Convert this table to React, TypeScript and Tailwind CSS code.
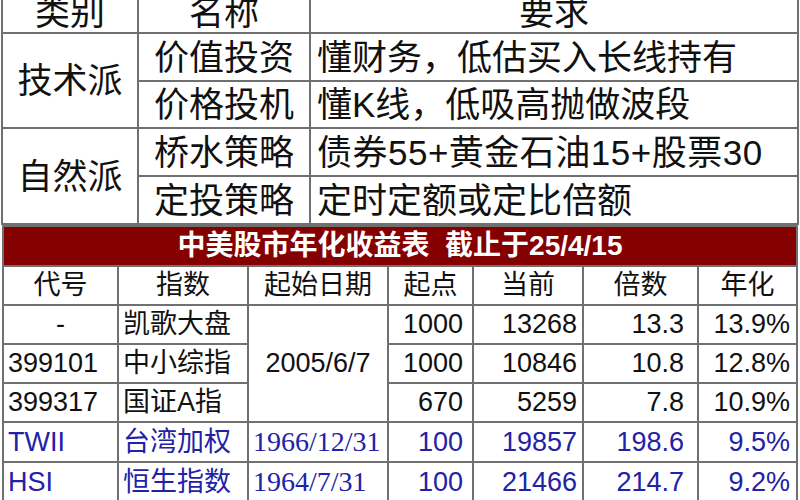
import React from 'react'

const FONT = "font-['Liberation_Sans','Noto_Sans_CJK_SC',sans-serif]"

type Row = {
  code: string
  name: string
  date?: string
  start: string
  now: string
  mult: string
  rate: string
  blue?: boolean
}

const rows: Row[] = [
  { code: '-', name: '凯歌大盘', start: '1000', now: '13268', mult: '13.3', rate: '13.9%' },
  { code: '399101', name: '中小综指', start: '1000', now: '10846', mult: '10.8', rate: '12.8%' },
  { code: '399317', name: '国证A指', start: '670', now: '5259', mult: '7.8', rate: '10.9%' },
  { code: 'TWII', name: '台湾加权', date: '1966/12/31', start: '100', now: '19857', mult: '198.6', rate: '9.5%', blue: true },
  { code: 'HSI', name: '恒生指数', date: '1964/7/31', start: '100', now: '21466', mult: '214.7', rate: '9.2%', blue: true },
]

function Cell({ className = '', children }: { className?: string; children?: React.ReactNode }) {
  return <div className={`bg-white flex items-center leading-none whitespace-nowrap ${className}`}>{children}</div>
}

export default function App() {
  return (
    <div className={`w-[800px] h-[500px] overflow-hidden bg-white text-[#111] ${FONT}`}>
      {/* Top table: styles */}
      <div className="-mt-[10px] ml-[1px] w-[798px] p-[2px] gap-[2px] bg-[#707070] grid grid-cols-[134px_170px_486px] grid-rows-[40px_46px_45px_46px_46px] text-[35px]">
        <Cell className="justify-center">类别</Cell>
        <Cell className="justify-center">名称</Cell>
        <Cell className="justify-center">要求</Cell>

        <Cell className="row-span-2 justify-center">技术派</Cell>
        <Cell className="justify-center">价值投资</Cell>
        <Cell className="pl-[6px]">懂财务，低估买入长线持有</Cell>
        <Cell className="justify-center">价格投机</Cell>
        <Cell className="pl-[6px]">懂K线，低吸高抛做波段</Cell>

        <Cell className="row-span-2 justify-center">自然派</Cell>
        <Cell className="justify-center">桥水策略</Cell>
        <Cell className="pl-[6px] tracking-[0.5px]">债券55+黄金石油15+股票30</Cell>
        <Cell className="justify-center">定投策略</Cell>
        <Cell className="pl-[6px]">定时定额或定比倍额</Cell>
      </div>

      {/* Bottom table: returns */}
      <div className="ml-[2px] w-[796px] p-[2px] gap-[2px] bg-[#707070] grid grid-cols-[113px_128px_138px_83px_108px_113px_97px] grid-rows-[38px_37px_37px_37px_37px_38px_38px] text-[27px]">
        <div className="col-span-7 bg-[#850000] text-white font-bold text-[28px] flex items-center justify-center whitespace-pre leading-none">
          中美股市年化收益表  截止于25/4/15
        </div>

        {['代号', '指数', '起始日期', '起点', '当前', '倍数', '年化'].map((h) => (
          <Cell key={h} className="justify-center">{h}</Cell>
        ))}

        {rows.map((r, i) => {
          const color = r.blue ? 'text-[#2222a6]' : ''
          return (
            <React.Fragment key={r.code}>
              <Cell className={`${r.code === '-' ? 'justify-center' : 'pl-[4px]'} ${color}`}>{r.code}</Cell>
              <Cell className={`pl-[4px] ${color}`}>{r.name}</Cell>
              {i === 0 && (
                <Cell className="row-span-3 justify-center">2005/6/7</Cell>
              )}
              {r.date && (
                <Cell className={`pl-[4px] font-['Liberation_Serif',serif] text-[28px] ${color}`}>{r.date}</Cell>
              )}
              <Cell className={`justify-end pr-[9px] ${color}`}>{r.start}</Cell>
              <Cell className={`justify-end pr-[5px] ${color}`}>{r.now}</Cell>
              <Cell className={`justify-end pr-[13px] ${color}`}>{r.mult}</Cell>
              <Cell className={`justify-end pr-[6px] ${color}`}>{r.rate}</Cell>
            </React.Fragment>
          )
        })}
      </div>
    </div>
  )
}
